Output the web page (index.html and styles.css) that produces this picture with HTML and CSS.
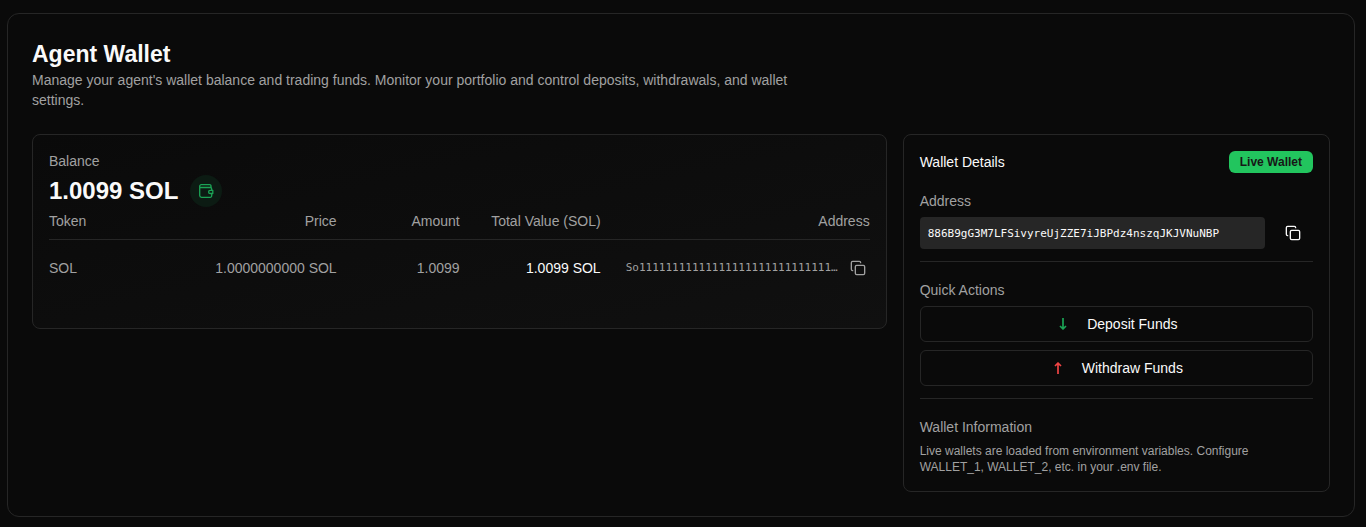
FILE: index.html
```html
<!DOCTYPE html>
<html lang="en">
<head>
<meta charset="utf-8">
<meta name="viewport" content="width=device-width, initial-scale=1">
<title>Agent Wallet</title>
<link rel="stylesheet" href="styles.css">
</head>
<body>
<svg class="sprite" aria-hidden="true">
  <symbol id="copy" viewBox="0 0 24 24"><rect x="8" y="8" width="14" height="14" rx="2"/><path d="M4 16c-1.1 0-2-.9-2-2V4c0-1.100.9-2 2-2h10c1.100 0 2 .9 2 2"/></symbol>
</svg>
<main class="wallet">
  <header class="intro">
    <h1 class="title">Agent Wallet</h1>
    <p class="lead">Manage your agent's wallet balance and trading funds. Monitor your portfolio and control deposits, withdrawals, and wallet settings.</p>
  </header>
  <div class="columns">
    <section class="panel balance">
      <h2 class="label">Balance</h2>
      <div class="total">
        <span class="total-value">1.0099 SOL</span>
        <span class="total-icon">
          <svg class="icon" viewBox="0 0 16 16" aria-hidden="true"><path d="M13 4.500V3a1.300 1.300 0 0 0-1.300-1.300H3.200a1.500 1.500 0 0 0-1.500 1.500v9.300A1.800 1.800 0 0 0 3.500 14.300h8.700a1.500 1.500 0 0 0 1.500-1.500v-2M1.700 3.500a1.200 1.200 0 0 0 1.300 1h9.200a1.500 1.500 0 0 1 1.500 1.500v1M14.800 7.300h-2.600a1.600 1.600 0 0 0 0 3.200h2.600z"/></svg>
        </span>
      </div>
      <table class="tokens">
        <thead>
          <tr><th class="col-token">Token</th><th>Price</th><th class="col-amount">Amount</th><th class="col-total">Total Value (SOL)</th><th class="col-address">Address</th></tr>
        </thead>
        <tbody>
          <tr>
            <td>SOL</td><td>1.0000000000 SOL</td><td>1.0099</td><td class="strong">1.0099 SOL</td>
            <td><div class="token-address"><span class="hash">So11111111111111111111111111111…</span><button class="copy-small" type="button" aria-label="Copy token address"><svg class="icon"><use href="#copy"/></svg></button></div></td>
          </tr>
        </tbody>
      </table>
    </section>
    <section class="panel">
      <div class="details-head">
        <h2 class="details-title">Wallet Details</h2>
        <span class="badge">Live Wallet</span>
      </div>
      <div class="group">
        <h3 class="label">Address</h3>
        <div class="address-row">
          <code class="address">886B9gG3M7LFSivyreUjZZE7iJBPdz4nszqJKJVNuNBP</code>
          <button class="copy" type="button" aria-label="Copy wallet address"><svg class="icon"><use href="#copy"/></svg></button>
        </div>
      </div>
      <div class="group ruled">
        <h3 class="label">Quick Actions</h3>
        <div class="actions">
          <button class="action" type="button"><svg class="icon deposit" viewBox="0 0 16 16" aria-hidden="true"><path d="M8 2v11M5 10l3 3 3-3"/></svg>Deposit Funds</button>
          <button class="action" type="button"><svg class="icon withdraw" viewBox="0 0 16 16" aria-hidden="true"><path d="M8 14V3M5 6l3-3 3 3"/></svg>Withdraw Funds</button>
        </div>
      </div>
      <div class="group ruled">
        <h3 class="label">Wallet Information</h3>
        <p class="note">Live wallets are loaded from environment variables. Configure WALLET_1, WALLET_2, etc. in your .env file.</p>
      </div>
    </section>
  </div>
</main>
</body>
</html>
```
FILE: styles.css
```css
* { box-sizing: border-box; }
body {
  margin: 0;
  padding: 13px 11px 10px 7px;
  background: #0a0a0a;
  color: #fafafa;
  font: 14px/20px "Liberation Sans", Arial, sans-serif;
}
h1, h2, h3, p { margin: 0; font-size: 14px; font-weight: 400; }
button { padding: 0; border: 0; background: none; color: inherit; font: inherit; cursor: pointer; }
.sprite { display: none; }
.icon { width: 16px; height: 16px; flex: none; fill: none; stroke: currentColor; stroke-width: 2; stroke-linecap: round; stroke-linejoin: round; }
.wallet { padding: 24px; border: 1px solid #262626; border-radius: 12px; }
.intro { max-width: 768px; margin-bottom: 24px; }
.title { font-size: 23px; line-height: 32px; font-weight: 700; }
.lead, .label, .note { color: #a1a1a1; }
.columns { display: grid; grid-template-columns: 2fr 1fr; gap: 16px; align-items: start; }
.panel { min-width: 0; padding: 16px; border: 1px solid #262626; border-radius: 8px; }

.balance { padding-bottom: 32px; background: linear-gradient(to bottom right, #0a0a0a, #101010); }
.total { display: flex; align-items: center; gap: 12px; margin: 4px 0; }
.total-value { font-size: 24px; line-height: 32px; font-weight: 700; }
.total-icon { display: grid; place-items: center; width: 32px; height: 32px; border-radius: 50%; background: #0c1b13; color: #1ba355; }
.total-icon .icon { stroke-width: 1.3; }
.tokens { width: 100%; table-layout: fixed; border-collapse: collapse; color: #a1a1a1; text-align: right; }
.tokens th { padding: 0 0 8px; border-bottom: 1px solid #262626; font-weight: 400; }
.tokens td { padding: 12px 0; }
.tokens th:first-child, .tokens td:first-child { text-align: left; }
.tokens .strong { color: #fafafa; }
.tokens .col-token { width: 123px; }
.tokens .col-amount { width: 123px; }
.tokens .col-total { width: 141px; }
.tokens .col-address { width: 269px; }
.token-address { display: flex; justify-content: flex-end; align-items: center; gap: 8px; padding-left: 24px; }
.hash { white-space: nowrap; font: 11px/16px "DejaVu Sans Mono", monospace; }
.copy-small { display: grid; place-items: center; width: 24px; height: 32px; flex: none; }

.details-head { display: flex; justify-content: space-between; align-items: center; margin-bottom: 18px; }
.badge { padding: 3px 11px; border-radius: 6px; background: #22c55e; color: #171717; font-size: 12px; line-height: 16px; font-weight: 700; }
.group { display: grid; gap: 6px; }
.ruled { margin-top: 12px; padding-top: 18px; border-top: 1px solid #262626; }
.address-row { display: flex; gap: 8px; min-width: 0; }
.address { flex: 1; min-width: 0; padding: 9px 8px 7px; overflow: hidden; text-overflow: ellipsis; border-radius: 4px; background: #262626; font: 11px/16px "DejaVu Sans Mono", monospace; }
.copy { display: grid; place-items: center; width: 40px; flex: none; }
.actions { display: grid; gap: 8px; }
.action { display: flex; justify-content: center; align-items: center; gap: 16px; height: 36px; border: 1px solid #262626; border-radius: 6px; }
.deposit { color: #1ba355; }
.withdraw { color: #ef4444; }
.action .icon { stroke-width: 1.7; stroke-linecap: butt; }
.note { font-size: 12px; line-height: 16px; }
```
